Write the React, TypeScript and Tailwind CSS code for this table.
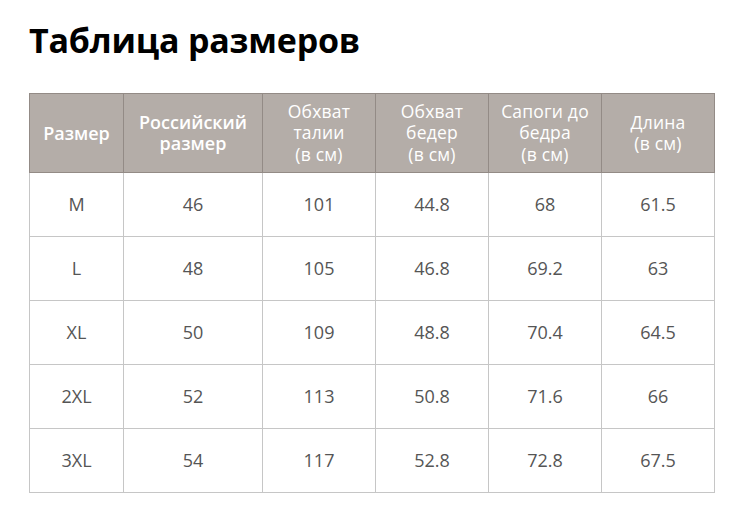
const headers = [
  { lines: ['Размер'], bold: true },
  { lines: ['Российский', 'размер'], bold: true },
  { lines: ['Обхват', 'талии', '(в см)'] },
  { lines: ['Обхват', 'бедер', '(в см)'] },
  { lines: ['Сапоги до', 'бедра', '(в см)'] },
  { lines: ['Длина', '(в см)'] },
]

const rows = [
  ['M', '46', '101', '44.8', '68', '61.5'],
  ['L', '48', '105', '46.8', '69.2', '63'],
  ['XL', '50', '109', '48.8', '70.4', '64.5'],
  ['2XL', '52', '113', '50.8', '71.6', '66'],
  ['3XL', '54', '117', '52.8', '72.8', '67.5'],
]

const widths = ['w-[94px]', 'w-[139px]', 'w-[113px]', 'w-[113px]', 'w-[113px]', 'w-[113px]']

export default function App() {
  return (
    <div className="w-[750px] h-[526px] bg-white font-['Open_Sans',sans-serif] pl-[29px] pt-[16px]">
      <h1 className="text-[34px] font-bold leading-[48px] text-black tracking-[-0.2px]">Таблица размеров</h1>
      <table className="mt-[29px] border-collapse table-fixed w-[686px]">
        <thead>
          <tr className="bg-[#b4ada8] h-[79px]">
            {headers.map((h, i) => (
              <th
                key={i}
                className={`${widths[i]} border border-[#938b86] text-white text-center align-middle p-0 ${
                  h.bold ? 'font-semibold text-[18px] leading-[21px]' : 'font-normal text-[17.5px] leading-[21.5px] tracking-[0.2px]'
                }`}
              >
                {h.lines.map((l, j) => (
                  <div key={j}>{l}</div>
                ))}
              </th>
            ))}
          </tr>
        </thead>
        <tbody>
          {rows.map((r, i) => (
            <tr key={i} className="h-[64px]">
              {r.map((c, j) => (
                <td key={j} className="border border-[#c6c6c6] text-center align-middle text-[18px] text-[#555] p-0">
                  {c}
                </td>
              ))}
            </tr>
          ))}
        </tbody>
      </table>
    </div>
  )
}
